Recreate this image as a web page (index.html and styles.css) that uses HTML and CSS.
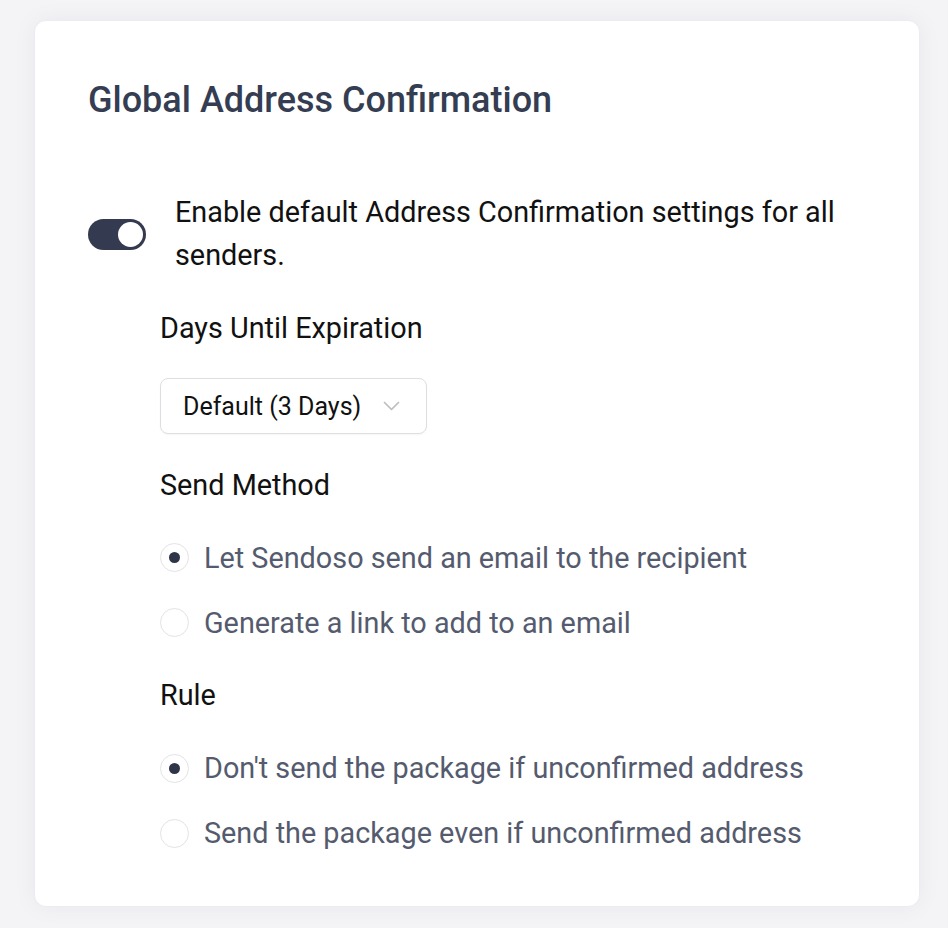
FILE: index.html
```html
<!DOCTYPE html>
<html>
<head>
<meta charset="utf-8">
<link rel="stylesheet" href="styles.css">
</head>
<body>
<div class="card">
  <h1 class="title">Global Address Confirmation</h1>
  <div class="toggle-row">
    <span class="toggle"><span class="knob"></span></span>
    <p class="toggle-text">Enable default Address Confirmation settings for all senders.</p>
  </div>
  <div class="settings">
    <div class="label">Days Until Expiration</div>
    <div class="select">
      <span>Default (3 Days)</span>
      <svg class="chevron" width="17" height="10" viewBox="0 0 17 10"><path d="M1.5 1.5 L8.5 8.5 L15.5 1.5" fill="none" stroke="#bdbdc2" stroke-width="1.7" stroke-linecap="round" stroke-linejoin="round"/></svg>
    </div>
    <div class="label">Send Method</div>
    <div class="radios">
      <div class="radio-row"><span class="radio checked"></span><span class="radio-text">Let Sendoso send an email to the recipient</span></div>
      <div class="radio-row"><span class="radio"></span><span class="radio-text">Generate a link to add to an email</span></div>
    </div>
    <div class="label">Rule</div>
    <div class="radios">
      <div class="radio-row"><span class="radio checked"></span><span class="radio-text">Don't send the package if unconfirmed address</span></div>
      <div class="radio-row"><span class="radio"></span><span class="radio-text">Send the package even if unconfirmed address</span></div>
    </div>
  </div>
</div>
</body>
</html>
```

FILE: styles.css
```css
html, body {
  margin: 0;
  padding: 0;
}
body {
  background: #f4f4f6;
  font-family: Roboto, "Liberation Sans", sans-serif;
  padding: 20px 28px 21px 34px;
}
.card {
  background: #fff;
  border: 1px solid #ecebf5;
  border-radius: 12px;
  box-shadow: 0 0 24px rgba(0, 0, 0, 0.05);
  height: 887px;
  box-sizing: border-box;
  padding: 58px 55px 0 53px;
}
.title {
  margin: 0;
  font-size: 36px;
  font-weight: 500;
  color: #343d52;
  line-height: 43px;
}
.toggle-row {
  display: flex;
  align-items: center;
  margin-top: 69px;
}
.toggle {
  flex: none;
  width: 58px;
  height: 31px;
  border-radius: 16px;
  background: #343a50;
  display: flex;
  justify-content: flex-end;
  align-items: center;
  padding: 3px;
  box-sizing: border-box;
}
.knob {
  width: 25px;
  height: 25px;
  border-radius: 50%;
  background: #fff;
}
.toggle-text {
  margin: 0 0 0 29px;
  font-size: 28.8px;
  line-height: 43.2px;
  color: #111;
}
.settings {
  padding-left: 72px;
}
.label {
  font-size: 28.8px;
  color: #111;
  line-height: 43.2px;
  margin-top: 29.5px;
}
.select {
  margin-top: 28px;
  width: 267px;
  height: 56px;
  box-sizing: border-box;
  border: 1px solid #dedee2;
  border-radius: 8px;
  display: flex;
  align-items: center;
  padding-left: 22px;
  font-size: 25px;
  color: #111;
  box-shadow: 0 1px 2px rgba(0, 0, 0, 0.04);
}
.chevron {
  margin-left: 22px;
}
.radios {
  display: flex;
  flex-direction: column;
  gap: 22px;
  margin-top: 29.5px;
}
.radio-row {
  display: flex;
  align-items: center;
  height: 43px;
}
.radio {
  flex: none;
  width: 29px;
  height: 29px;
  border-radius: 50%;
  border: 1px solid #e3e3e7;
  box-sizing: border-box;
  display: flex;
  align-items: center;
  justify-content: center;
  margin-right: 15px;
}
.radio.checked::after {
  content: "";
  width: 11px;
  height: 11px;
  border-radius: 50%;
  background: #2f3549;
}
.radio-text {
  font-size: 28.8px;
  color: #555b6e;
}
```
